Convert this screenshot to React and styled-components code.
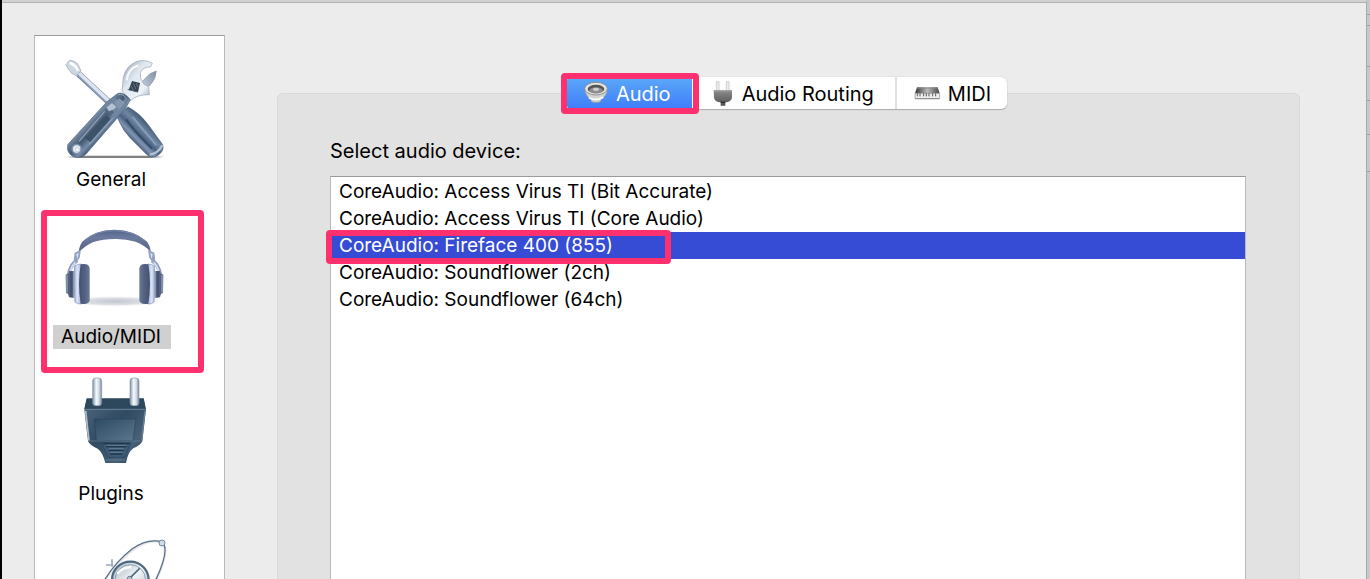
import React, { useState } from "react";
import styled, { createGlobalStyle, css } from "styled-components";

const devices = [
  "CoreAudio: Access Virus TI (Bit Accurate)",
  "CoreAudio: Access Virus TI (Core Audio)",
  "CoreAudio: Fireface 400 (855)",
  "CoreAudio: Soundflower (2ch)",
  "CoreAudio: Soundflower (64ch)",
];

const ToolsIcon = () => (
  <svg width="110" height="110" viewBox="81 69 330 330" aria-hidden="true">
    <defs>
      <linearGradient id="toolShadow" x1="0" x2="1">
        <stop offset="0" stopColor="#888" stopOpacity="0.1" />
        <stop offset="0.15" stopColor="#808080" />
        <stop offset="0.85" stopColor="#808080" />
        <stop offset="1" stopColor="#888" stopOpacity="0.1" />
      </linearGradient>
      <linearGradient id="driverGrip" gradientUnits="userSpaceOnUse" x1="300" y1="330" x2="350" y2="280">
        <stop offset="0" stopColor="#3d5573" />
        <stop offset="0.25" stopColor="#8095b1" />
        <stop offset="0.45" stopColor="#4a6281" />
        <stop offset="0.7" stopColor="#7187a3" />
        <stop offset="1" stopColor="#485f7c" />
      </linearGradient>
      <linearGradient id="wrenchGrip" gradientUnits="userSpaceOnUse" x1="165" y1="275" x2="215" y2="322">
        <stop offset="0" stopColor="#93a5bc" />
        <stop offset="0.25" stopColor="#647991" />
        <stop offset="0.5" stopColor="#445a72" />
        <stop offset="0.8" stopColor="#768ca8" />
        <stop offset="1" stopColor="#445b79" />
      </linearGradient>
      <linearGradient id="wrenchHead" x1="0" y1="0" x2="1" y2="1">
        <stop offset="0" stopColor="#8f9cac" />
        <stop offset="0.4" stopColor="#dfe7f0" />
        <stop offset="0.7" stopColor="#eef3f8" />
        <stop offset="1" stopColor="#98a7ba" />
      </linearGradient>
      <linearGradient id="wrenchJaw" x1="0" y1="1" x2="1" y2="0">
        <stop offset="0" stopColor="#c4cfdb" />
        <stop offset="1" stopColor="#7f90a5" />
      </linearGradient>
    </defs>
    <rect x="112" y="377" width="288" height="7" rx="3" fill="url(#toolShadow)" />
    <path d="M146 132 L243 222" stroke="#6b7e97" strokeWidth="19" />
    <path d="M147 131 L243 220" stroke="#dce5f0" strokeWidth="13" />
    <path d="M143 135 L239 225" stroke="#95a6bd" strokeWidth="4" />
    <path d="M108 104 L119 91 Q135 92 144 103 L153 123 L139 137 L125 130 Q114 119 108 104Z" fill="#cdd7e2" stroke="#93a2b4" strokeWidth="2" />
    <path d="M119 98 Q137 104 144 122" fill="none" stroke="#fff" strokeWidth="8" />
    <path d="M262 262 L294 231 Q330 250 355 285 L398 344 Q404 363 382 377 Q364 385 351 374 L300 323 Q280 302 270 279Z" fill="url(#driverGrip)" stroke="#41587a" strokeWidth="2" />
    <path d="M289 268 Q303 293 350 340 L366 356" fill="none" stroke="#354c69" strokeWidth="6" />
    <path d="M308 260 Q340 300 379 346" fill="none" stroke="#8ba0bb" strokeWidth="5" />
    <path d="M359 374 Q385 370 397 346" fill="none" stroke="#b3c1d0" strokeWidth="7" />
    <path d="M345 146 L360 131 L379 123 Q378 148 359 167 L346 172 L335 157Z" fill="url(#wrenchJaw)" stroke="#8393a7" strokeWidth="2" />
    <path d="M276 184 L280 142 Q287 108 321 94 Q346 87 367 100 L361 111 Q338 110 331 128 L332 145 L342 163 L356 170 L358 194 Q321 193 302 212Z" fill="url(#wrenchHead)" stroke="#94a2b2" strokeWidth="2" />
    <path d="M290 151 Q294 116 325 106" fill="none" stroke="#f5f9fc" strokeWidth="7" />
    <path d="M306 153 L330 159 L324 187 L296 180Z" fill="#33414f" />
    <path d="M310 160 L318 178 M319 160 L324 172 M303 167 L310 180" stroke="#8594a3" strokeWidth="2" />
    <path d="M293 178 L323 186" stroke="#55667a" strokeWidth="3" />
    <path d="M264 190 Q281 185 301 209 L287 235 L168 372 Q151 389 128 379 Q107 365 114 343 L232 214Z" fill="url(#wrenchGrip)" stroke="#4c627e" strokeWidth="2" />
    <path d="M224 244 L147 334 M250 262 L177 344" stroke="#8a9eb6" strokeWidth="4" />
    <path d="M229 256 L242 266 L181 336 L164 324Z" fill="#3c5269" />
    <path d="M226 231 L253 202 L286 231 L255 265Z" fill="#7187a1" />
    <path d="M230 232 L246 219 L259 231 L240 248Z" fill="#b5c2d2" />
    <path d="M253 217 L268 205 L285 219 L266 239Z" fill="#8496ad" />
    <path d="M264 194 Q281 189 289 208 L275 220" fill="none" stroke="#8fa1b7" strokeWidth="3" />
    <path d="M231 247 L247 239 L252 248 L240 256Z" fill="#52687f" />
    <circle cx="140" cy="357" r="16" fill="#7e92aa" />
    <circle cx="140" cy="357" r="11" fill="#e9edf2" />
    <circle cx="142" cy="359" r="6" fill="#fff" stroke="#aab6c4" strokeWidth="2" />
  </svg>
);

const HeadphonesIcon = () => (
  <svg width="110" height="110" viewBox="81 15 330 330" aria-hidden="true">
    <defs>
      <radialGradient id="phoneShadow">
        <stop offset="0" stopColor="#c3c6cf" />
        <stop offset="0.6" stopColor="#dddfe5" />
        <stop offset="1" stopColor="#fff" stopOpacity="0" />
      </radialGradient>
      <linearGradient id="band" x1="0" y1="0" x2="0" y2="1">
        <stop offset="0" stopColor="#53628a" />
        <stop offset="0.35" stopColor="#6b7a9d" />
        <stop offset="1" stopColor="#526182" />
      </linearGradient>
      <linearGradient id="shell" x1="0" x2="1">
        <stop offset="0" stopColor="#8f9dc0" />
        <stop offset="0.45" stopColor="#dce6fb" />
        <stop offset="1" stopColor="#a3b1d2" />
      </linearGradient>
      <linearGradient id="cushion" x1="0" x2="1">
        <stop offset="0" stopColor="#44506f" />
        <stop offset="0.6" stopColor="#566484" />
        <stop offset="1" stopColor="#6c7a9a" />
      </linearGradient>
      <g id="earCup">
        <path d="M142 166 Q119 180 116 211" fill="none" stroke="#8b9aba" strokeWidth="11" />
        <path d="M143 165 Q122 181 120 208" fill="none" stroke="#d0dcf3" strokeWidth="6" />
        <path d="M134 143 L153 134 L149 158 L138 174 L131 168Z" fill="#93a2c2" />
        <path d="M139 147 L146 144 L142 162Z" fill="#dce5f8" />
        <path d="M117 198 L131 198 L131 279 L117 277 L114 266 L108 264 L107 209 L116 205Z" fill="#53617f" />
        <path d="M111 210 V263" stroke="#93a2c2" strokeWidth="4" />
        <path d="M123 200 V276" stroke="#414d6a" strokeWidth="4" />
        <path d="M134 183 Q142 177 154 177 V297 Q142 298 135 291 Q128 239 134 183Z" fill="url(#shell)" stroke="#8695b7" strokeWidth="2" />
        <path d="M152 178 Q177 173 179 190 V286 Q177 300 152 296 Q142 238 152 178Z" fill="url(#cushion)" />
      </g>
    </defs>
    <ellipse cx="254" cy="289" rx="158" ry="17" fill="url(#phoneShadow)" />
    <path d="M146 142 Q148 121 158 109 Q194 75 253 74 Q313 75 350 109 Q360 121 362 140 Q345 121 317 110 Q287 101 253 102 Q219 102 190 111 Q165 122 146 142Z" fill="url(#band)" />
    <path d="M164 105 Q200 77 253 77 Q308 78 344 106" fill="none" stroke="#7b89aa" strokeWidth="3" />
    <use href="#earCup" />
    <use href="#earCup" transform="matrix(-1 0 0 1 507 0)" />
  </svg>
);

const PlugIcon = () => (
  <svg width="110" height="110" viewBox="81 -9 330 330" aria-hidden="true">
    <defs>
      <linearGradient id="prong" x1="0" x2="1">
        <stop offset="0" stopColor="#8191a1" />
        <stop offset="0.4" stopColor="#f4f9fd" />
        <stop offset="0.7" stopColor="#d3dde7" />
        <stop offset="1" stopColor="#71859a" />
      </linearGradient>
      <linearGradient id="plugBody" x1="0" y1="0" x2="1" y2="1">
        <stop offset="0" stopColor="#4f697f" />
        <stop offset="0.45" stopColor="#2f4a61" />
        <stop offset="0.75" stopColor="#466178" />
        <stop offset="1" stopColor="#142b3e" />
      </linearGradient>
      <linearGradient id="plugPanel" x1="0" y1="0" x2="1" y2="1">
        <stop offset="0" stopColor="#2d4a63" />
        <stop offset="1" stopColor="#5b778e" />
      </linearGradient>
    </defs>
    <path d="M170 85 H341 L348 118 L337 214 Q331 226 310 235 Q294 246 288 279 H226 Q218 246 203 236 Q177 224 174 213 L163 119Z" fill="url(#plugBody)" />
    <path d="M170 86 H341 L347 117 H163Z" fill="#2d475d" />
    <path d="M164 118 H347" stroke="#6c8498" strokeWidth="3" />
    <path d="M167 123 L177 212" stroke="#b0bfcb" strokeWidth="5" />
    <path d="M345 123 L335 211" stroke="#668096" strokeWidth="4" />
    <path d="M192 147 H318 L309 212 H199Z" fill="url(#plugPanel)" stroke="#2a445a" strokeWidth="2" />
    <path d="M176 213 H335" stroke="#68829a" strokeWidth="2" />
    <path d="M215 219 H303 L283 262 H235Z" fill="#3d5b75" stroke="#29435a" strokeWidth="2" />
    <path d="M219 221 H298 M228 230 H290 M236 241 H281 M240 252 H277" stroke="#1e374c" strokeWidth="4" />
    <path d="M230 226 H289 M237 236 H281 M241 247 H277" stroke="#7890a5" strokeWidth="2" />
    <path d="M228 270 H286" stroke="#587188" strokeWidth="4" />
    <rect x="188" y="24" width="27" height="83" rx="9" fill="url(#prong)" stroke="#8797a7" strokeWidth="2" />
    <rect x="300" y="24" width="27" height="83" rx="9" fill="url(#prong)" stroke="#8797a7" strokeWidth="2" />
  </svg>
);

const GaugeIcon = () => (
  <svg width="110" height="110" viewBox="81 462 330 330" aria-hidden="true">
    <defs>
      <linearGradient id="dial" x1="0" y1="0" x2="1" y2="1">
        <stop offset="0" stopColor="#a3b3c1" />
        <stop offset="0.5" stopColor="#f0f4f7" />
        <stop offset="1" stopColor="#a6b6c4" />
      </linearGradient>
    </defs>
    <path d="M225 631 Q259 578 309 539 Q354 507 390 515 Q426 531 377 631" fill="none" stroke="#e4e6e8" strokeWidth="8" />
    <path d="M223 631 Q256 576 306 537 Q351 505 394 515 Q423 532 377 631" fill="none" stroke="#58718a" strokeWidth="4" />
    <path d="M228 585 H250 M246 568 V590" stroke="#9bacba" strokeWidth="5" />
    <circle cx="301" cy="630" r="55" fill="url(#dial)" stroke="#4d687f" strokeWidth="7" />
    <circle cx="301" cy="630" r="46" fill="none" stroke="#8da0b1" strokeWidth="3" />
    <path d="M262 611 Q279 591 304 591" fill="none" stroke="#fff" strokeWidth="7" />
    <path d="M298 626 L329 595" stroke="#526b80" strokeWidth="5" />
    <circle cx="299" cy="626" r="7" fill="#b6c5d1" stroke="#5b7287" strokeWidth="3" />
    <circle cx="396" cy="519" r="9" fill="#d0dae4" stroke="#758ba0" strokeWidth="3" />
  </svg>
);

const SpeakerIcon = () => (
  <svg width="26" height="24" viewBox="96 66 78 72" aria-hidden="true">
    <path d="M101 96 Q107 114 120 123 L121 128 Q135 133 149 128 L150 122 Q165 111 170 96Z" fill="#d4d4d4" stroke="#8b8b8b" strokeWidth="2" />
    <path d="M114 116 Q135 127 157 115" fill="none" stroke="#fafafa" strokeWidth="5" />
    <ellipse cx="135" cy="89" rx="34" ry="19" fill="#e4e4e4" stroke="#909090" strokeWidth="3" />
    <ellipse cx="135" cy="90" rx="25" ry="13" fill="#555" />
    <ellipse cx="135" cy="94" rx="20" ry="9" fill="#8d8d8d" />
    <ellipse cx="135" cy="91" rx="9" ry="5" fill="#d0d0d0" />
  </svg>
);

const SmallPlugIcon = () => (
  <svg width="24" height="26" viewBox="480 57 72 78" aria-hidden="true">
    <defs>
      <linearGradient id="smallPlug" x1="0" y1="0" x2="0" y2="1">
        <stop offset="0" stopColor="#8b8b8b" />
        <stop offset="1" stopColor="#505050" />
      </linearGradient>
    </defs>
    <path d="M496 62 h8 v28 h-8z M526 62 h8 v28 h-8z" fill="#eee" stroke="#bbb" strokeWidth="2" />
    <path d="M488 88 H543 V110 Q541 122 523 124 V134 H509 V124 Q491 122 489 110Z" fill="url(#smallPlug)" />
    <path d="M490 90 H542" stroke="#a0a0a0" strokeWidth="3" />
    <path d="M509 124 H523" stroke="#303030" strokeWidth="4" />
  </svg>
);

const KeyboardIcon = () => (
  <svg width="27" height="19" viewBox="405 66 81 57" aria-hidden="true">
    <defs>
      <linearGradient id="keyboardTop" x1="0" x2="1">
        <stop offset="0" stopColor="#333" />
        <stop offset="0.5" stopColor="#bbb" />
        <stop offset="1" stopColor="#444" />
      </linearGradient>
    </defs>
    <path d="M414 76 H476 L482 94 H408Z" fill="url(#keyboardTop)" />
    <path d="M414 78 H476" stroke="#888" strokeWidth="3" />
    <path d="M408 94 H482 V110 H408Z" fill="#eee" stroke="#888" strokeWidth="2" />
    <path d="M415 94 V103 M423 94 V103 M434 94 V103 M442 94 V103 M450 94 V103 M461 94 V103 M470 94 V103" stroke="#555" strokeWidth="3" />
    <path d="M409 110 H481" stroke="#888" strokeWidth="3" />
  </svg>
);

const sections = [
  { name: "General", icon: <ToolsIcon /> },
  { name: "Audio/MIDI", icon: <HeadphonesIcon />, marked: true },
  { name: "Plugins", icon: <PlugIcon /> },
  { icon: <GaugeIcon /> },
];

const tabs = [
  { name: "Audio", icon: <SpeakerIcon />, marked: true },
  { name: "Audio Routing", icon: <SmallPlugIcon /> },
  { name: "MIDI", icon: <KeyboardIcon /> },
];

const App = () => {
  const [section, setSection] = useState(1);
  const [tab, setTab] = useState(0);
  const [device, setDevice] = useState(2);

  return (
    <>
      <GlobalStyle />
      <Desktop>
        <Window>
          <Sidebar>
            {sections.map((item, i) => (
              <SidebarItem
                key={i}
                type="button"
                aria-current={section === i ? "page" : undefined}
                onClick={() => setSection(i)}
              >
                {item.icon}
                {item.name && (
                  <SidebarLabel $active={section === i}>{item.name}</SidebarLabel>
                )}
                {item.marked && <SectionMark />}
              </SidebarItem>
            ))}
          </Sidebar>
          <Main>
            <TabBar role="tablist">
              {tabs.map((item, i) => (
                <Tab
                  key={item.name}
                  type="button"
                  role="tab"
                  aria-selected={tab === i}
                  $active={tab === i}
                  onClick={() => setTab(i)}
                >
                  {item.icon}
                  <TabText>{item.name}</TabText>
                  {item.marked && <TabMark />}
                </Tab>
              ))}
            </TabBar>
            <Panel>
              <ListLabel id="device-label">Select audio device:</ListLabel>
              <DeviceList role="listbox" aria-labelledby="device-label">
                {devices.map((name, i) => (
                  <Device
                    key={name}
                    type="button"
                    role="option"
                    aria-selected={device === i}
                    $active={device === i}
                    onClick={() => setDevice(i)}
                  >
                    {name}
                    {i === 2 && <DeviceMark />}
                  </Device>
                ))}
              </DeviceList>
            </Panel>
          </Main>
        </Window>
        <Backdrop>
          {[15, 11, 41, 34, 34, 37].map((height, i) => (
            <BackdropRow key={i} $height={height} />
          ))}
        </Backdrop>
      </Desktop>
    </>
  );
};

export default App;

const GlobalStyle = createGlobalStyle`
  * {
    box-sizing: border-box;
  }

  body {
    margin: 0;
    background: #ececec;
    color: #000;
    font-family: Inter, "Liberation Sans", sans-serif;
    font-size: 19px;
  }

  button {
    margin: 0;
    border: 0;
    padding: 0;
    background: none;
    color: inherit;
    font: inherit;
  }
`;

const Desktop = styled.div`
  display: flex;
  height: 100vh;
  overflow: hidden;
  border-left: 2px solid #000;
`;

const Window = styled.div`
  display: flex;
  flex: 1;
  min-width: 0;
  gap: 52px;
  padding: 33px 66px 0 32px;
  border-top: 2px solid #d2d0d3;
  border-right: 1px solid #aaa;
  background: #ececec;
  box-shadow: inset 0 1px #b2b1b3;
`;

const Backdrop = styled.div`
  width: 3px;
  background: #c8c8c8;
`;

const BackdropRow = styled.div`
  height: ${(props) => props.$height}px;
  border-bottom: 1px solid #a2a2a2;
`;

const Sidebar = styled.nav`
  display: flex;
  flex-direction: column;
  flex: none;
  width: 191px;
  padding: 17px 20px 0 6px;
  overflow: hidden;
  border: 1px solid #b9b9b9;
  border-top-color: #9c9c9c;
  border-bottom: 0;
  background: #fff;
`;

const SidebarItem = styled.button`
  position: relative;
  display: flex;
  flex: none;
  flex-direction: column;
  align-items: center;
  gap: 5px;
  height: 157px;
  padding-right: 21px;
`;

const SidebarLabel = styled.span`
  padding: 0 10px 0 8px;
  line-height: 24px;
  background: ${(props) => (props.$active ? "#d0d0d0" : "transparent")};
`;

const mark = css`
  position: absolute;
  z-index: 1;
  border: 6px solid #ff306e;
  border-radius: 4px;
  pointer-events: none;
`;

const SectionMark = styled.span`
  ${mark}
  inset: 0 0 -6px 0;
`;

const TabMark = styled.span`
  ${mark}
  inset: -4px -7px -5px -5px;
`;

const DeviceMark = styled.span`
  ${mark}
  top: -2px;
  bottom: -5px;
  left: -5px;
  width: 345px;
`;

const Main = styled.main`
  display: flex;
  flex: 1;
  flex-direction: column;
  min-width: 0;
  padding-top: 42px;
`;

const TabBar = styled.div`
  position: relative;
  z-index: 1;
  display: flex;
  align-self: center;
  height: 32px;
  margin: 0 4px -16px 0;
  border-radius: 6px;
  background: #fff;
  box-shadow: 0 1px 1px #aaa, 0 0 1px #bbb;
`;

const Tab = styled.button`
  position: relative;
  display: flex;
  align-items: center;
  gap: 7px;
  padding: 0 21px 0 17px;
  font-size: 20px;
  color: ${(props) => (props.$active ? "#fff" : "#000")};
  background: ${(props) =>
    props.$active ? "linear-gradient(#5ba9f8, #3f7dfb)" : "transparent"};
  border-right: 2px solid ${(props) => (props.$active ? "#fff" : "#e2e2e2")};

  &:first-child {
    border-radius: 6px 0 0 6px;
  }

  &:last-child {
    padding-right: 16px;
    border-right: 0;
  }
`;

const TabText = styled.span`
  padding-top: 2px;
`;

const Panel = styled.section`
  display: flex;
  flex: 1;
  flex-direction: column;
  padding: 45px 53px 0 52px;
  border: 1px solid #d9d9d9;
  border-bottom: 0;
  border-radius: 6px 6px 0 0;
  background: #e2e2e2;
`;

const ListLabel = styled.div`
  margin-bottom: 13px;
  font-size: 20px;
  line-height: 24px;
`;

const DeviceList = styled.div`
  display: flex;
  flex: 1;
  flex-direction: column;
  padding-top: 1px;
  border: 1px solid #b9b9b9;
  border-top-color: #9a9a9a;
  border-bottom: 0;
  background: #fff;
`;

const Device = styled.button`
  position: relative;
  padding: 0 8px;
  line-height: 27px;
  text-align: left;
  color: ${(props) => (props.$active ? "#fff" : "#000")};
  background: ${(props) => (props.$active ? "#364cd4" : "transparent")};
`;
